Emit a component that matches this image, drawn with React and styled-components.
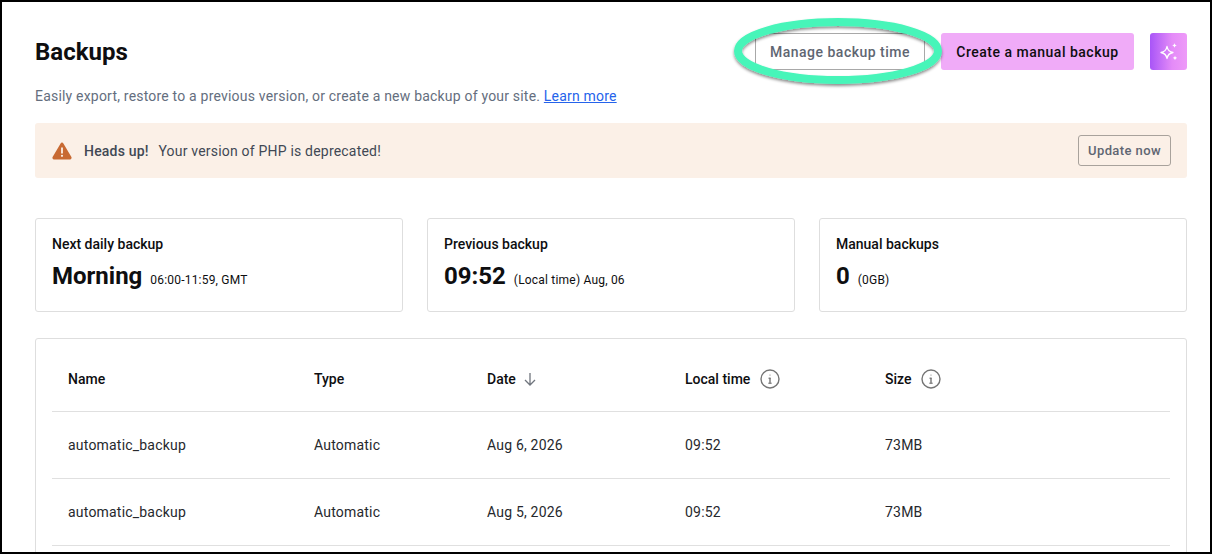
import React from "react";
import styled, { createGlobalStyle } from "styled-components";

const GlobalStyle = createGlobalStyle`
  html, body {
    margin: 0;
    padding: 0;
    background: #fff;
    overflow: hidden;
  }
  * {
    box-sizing: border-box;
  }
`;

const Frame = styled.div`
  width: 1212px;
  height: 554px;
  border: 2px solid #000;
  overflow: hidden;
  padding: 31px 23px 0 33px;
  background: #fff;
  font-family: Roboto, "Liberation Sans", sans-serif;
  color: #0e0e10;
`;

const Header = styled.div`
  display: flex;
  align-items: center;
  height: 37px;
`;

const Title = styled.h1`
  flex: 1;
  margin: 0;
  font-size: 24px;
  line-height: 32px;
  font-weight: 700;
  letter-spacing: 0;
`;

const Actions = styled.div`
  display: flex;
  gap: 16px;
`;

const OutlineButton = styled.button`
  position: relative;
  width: 170px;
  height: 37px;
  background: #fff;
  border: 1px solid #a8a8a8;
  border-radius: 2px;
  color: #5f6672;
  font: 500 14px/20px Roboto, sans-serif;
  letter-spacing: 0.5px;
  padding: 0;
`;

const Highlight = styled.svg`
  position: absolute;
  left: -26px;
  top: -21px;
  width: 216px;
  height: 76px;
  overflow: visible;
  pointer-events: none;
`;

const PrimaryButton = styled.button`
  width: 193px;
  height: 37px;
  background: #f0abf8;
  border: 0;
  border-radius: 3px;
  color: #0e0e10;
  font: 500 14px/20px Roboto, sans-serif;
  letter-spacing: 0.5px;
  padding: 0;
`;

const MagicButton = styled.button`
  width: 37px;
  height: 37px;
  border: 0;
  border-radius: 3px;
  padding: 0;
  background: linear-gradient(90deg, #a855f7 0%, #e48bf8 60%, #ee9af8 100%);
  display: flex;
  align-items: center;
  justify-content: center;
`;

const Intro = styled.p`
  margin: 16px 0 0;
  font-size: 14px;
  line-height: 20px;
  color: #646e7e;
  letter-spacing: 0.2px;
`;

const LearnMore = styled.a`
  color: #2563eb;
  text-decoration: underline;
`;

const Alert = styled.div`
  display: flex;
  align-items: center;
  height: 55px;
  margin-top: 17px;
  padding: 0 16px 0 17px;
  background: #fbf0e7;
  border-radius: 3px;
`;

const AlertText = styled.div`
  flex: 1;
  margin-left: 12px;
  font-size: 14px;
  line-height: 20px;
  letter-spacing: 0.2px;
  color: #414854;

  b {
    font-weight: 500;
    margin-right: 6px;
  }
`;

const UpdateButton = styled.button`
  width: 93px;
  height: 31px;
  background: transparent;
  border: 1px solid #a8a29c;
  border-radius: 3px;
  color: #5f6672;
  font: 500 13px/18px Roboto, sans-serif;
  letter-spacing: 0.4px;
  padding: 0;
`;

const Stats = styled.div`
  display: grid;
  grid-template-columns: repeat(3, 368px);
  gap: 24px;
  margin-top: 40px;
`;

const StatCard = styled.div`
  height: 94px;
  padding: 16px;
  border: 1px solid #dedede;
  border-radius: 3px;
`;

const StatLabel = styled.div`
  font-size: 14px;
  line-height: 18px;
  font-weight: 500;
`;

const StatValue = styled.div`
  display: flex;
  align-items: baseline;
  gap: 8px;
  margin-top: 7px;
  font-size: 12px;
  letter-spacing: 0.2px;
`;

const StatNumber = styled.span`
  font-size: 24px;
  line-height: 32px;
  font-weight: 700;
  letter-spacing: 0;
`;

const TableCard = styled.div`
  height: 260px;
  margin-top: 26px;
  padding: 8px 16px 0;
  border: 1px solid #dedede;
  border-radius: 3px;
`;

const Row = styled.div`
  display: grid;
  grid-template-columns: 246px 173px 198px 200px 1fr;
  align-items: center;
  height: ${(props) => (props.$head ? "65px" : "67px")};
  padding-left: 16px;
  border-bottom: 1px solid #e0e0e0;
  font-size: 14px;
  letter-spacing: 0.2px;
  color: #26282d;
`;

const HeadCell = styled.div`
  display: flex;
  align-items: center;
  gap: ${(props) => props.$gap || "10px"};
  font-weight: 500;
  color: #0e0e10;
  letter-spacing: 0;
`;

const InfoIcon = () => (
  <svg width="20" height="20" viewBox="0 0 20 20" fill="none" stroke="#757575" strokeWidth="1.4" strokeLinecap="round">
    <circle cx="10" cy="10" r="9" />
    <path d="M10 9.2v5" />
    <path d="M8.8 9.2H10M8.6 14.2h2.8" strokeWidth="1" />
    <circle cx="10" cy="6" r="0.6" fill="#757575" stroke="none" />
  </svg>
);

const SortIcon = () => (
  <svg width="14" height="14" viewBox="0 0 14 14" fill="none" stroke="#70757d" strokeWidth="1.3">
    <path d="M7 1v12M2 8l5 5 5-5" />
  </svg>
);

const WarningIcon = () => (
  <svg width="20" height="18" viewBox="0 0 20 18">
    <path
      fillRule="evenodd"
      fill="#c86a33"
      d="M10 .6c.6 0 1.1.3 1.4.8l8 13.6c.6 1-.1 2.4-1.4 2.4H2c-1.3 0-2-1.4-1.4-2.4l8-13.6c.3-.5.8-.8 1.4-.8zM9.1 5.6v6h1.8v-6H9.100zM10 12.700a1.100 1.100 0 1 0 0 2.200 1.100 1.100 0 0 0 0-2.200z"
    />
  </svg>
);

const SparkleIcon = () => (
  <svg width="22" height="22" viewBox="0 0 22 22" fill="none">
    <path
      d="M9 5.500c.7 3.700 2.100 5.300 6 6-3.900.7-5.300 2.300-6 6-.7-3.700-2.100-5.300-6-6 3.900-.7 5.300-2.300 6-6z"
      stroke="#fff"
      strokeWidth="1.300"
      strokeLinejoin="round"
    />
    <path d="M16.500 2c.3 1.500.9 2.100 2.300 2.400-1.400.3-2 .9-2.300 2.400-.3-1.500-.9-2.100-2.300-2.400 1.400-.3 2-.9 2.300-2.400z" fill="#fff" />
    <path d="M17 14.500c.3 1.500.9 2.100 2.300 2.400-1.400.3-2 .9-2.300 2.400-.3-1.500-.9-2.100-2.300-2.400 1.400-.3 2-.9 2.300-2.400z" fill="#fff" />
  </svg>
);

const rows = [
  { name: "automatic_backup", type: "Automatic", date: "Aug 6, 2026", time: "09:52", size: "73MB" },
  { name: "automatic_backup", type: "Automatic", date: "Aug 5, 2026", time: "09:52", size: "73MB" },
];

export default function App() {
  return (
    <Frame>
      <GlobalStyle />
      <Header>
        <Title>Backups</Title>
        <Actions>
          <OutlineButton>
            Manage backup time
            <Highlight viewBox="0 0 216 76">
              <defs>
                <filter id="ring-shadow" x="-10%" y="-20%" width="120%" height="150%">
                  <feDropShadow dx="0" dy="2" stdDeviation="1.500" floodColor="#000" floodOpacity="0.45" />
                </filter>
              </defs>
              <ellipse cx="108" cy="38" rx="100" ry="29" fill="none" stroke="#47f5b9" strokeWidth="8" filter="url(#ring-shadow)" />
            </Highlight>
          </OutlineButton>
          <PrimaryButton>Create a manual backup</PrimaryButton>
          <MagicButton>
            <SparkleIcon />
          </MagicButton>
        </Actions>
      </Header>
      <Intro>
        Easily export, restore to a previous version, or create a new backup of your site. <LearnMore>Learn more</LearnMore>
      </Intro>
      <Alert>
        <WarningIcon />
        <AlertText>
          <b>Heads up!</b> Your version of PHP is deprecated!
        </AlertText>
        <UpdateButton>Update now</UpdateButton>
      </Alert>
      <Stats>
        <StatCard>
          <StatLabel>Next daily backup</StatLabel>
          <StatValue>
            <StatNumber>Morning</StatNumber> 06:00-11:59, GMT
          </StatValue>
        </StatCard>
        <StatCard>
          <StatLabel>Previous backup</StatLabel>
          <StatValue>
            <StatNumber>09:52</StatNumber> (Local time) Aug, 06
          </StatValue>
        </StatCard>
        <StatCard>
          <StatLabel>Manual backups</StatLabel>
          <StatValue>
            <StatNumber>0</StatNumber> (0GB)
          </StatValue>
        </StatCard>
      </Stats>
      <TableCard>
        <Row $head>
          <HeadCell>Name</HeadCell>
          <HeadCell>Type</HeadCell>
          <HeadCell $gap="7px">
            Date <SortIcon />
          </HeadCell>
          <HeadCell>
            Local time <InfoIcon />
          </HeadCell>
          <HeadCell>
            Size <InfoIcon />
          </HeadCell>
        </Row>
        {rows.map((row) => (
          <Row key={row.date}>
            <div>{row.name}</div>
            <div>{row.type}</div>
            <div>{row.date}</div>
            <div>{row.time}</div>
            <div>{row.size}</div>
          </Row>
        ))}
      </TableCard>
    </Frame>
  );
}
